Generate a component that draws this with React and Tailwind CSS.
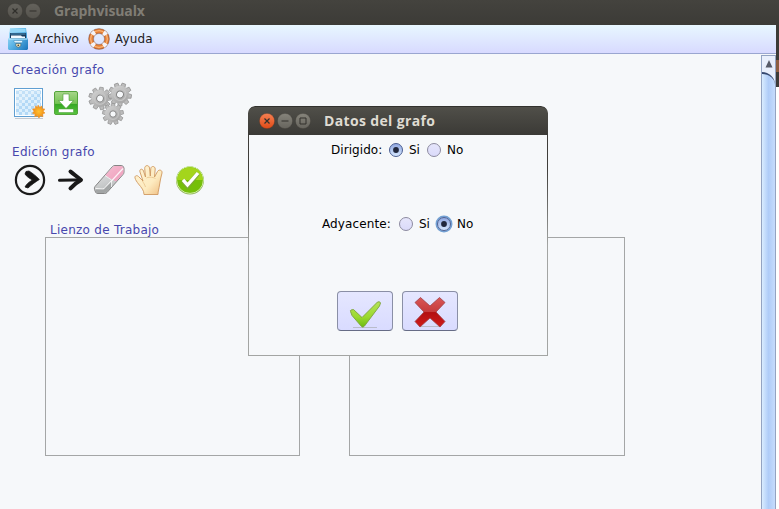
const S = "http://www.w3.org/2000/svg";

function WinButton({ kind, active, size }) {
  const id = "wb" + kind + (active ? "a" : "i");
  const top = !active ? "#64625c" : kind === "close" ? "#f68153" : "#86847b";
  const bottom = !active ? "#55534d" : kind === "close" ? "#df4a16" : "#66645d";
  const ink = active ? "#33312d" : "#302f2b";
  return (
    <svg xmlns={S} width={size} height={size} viewBox="0 0 16 16" className="block shrink-0">
      <defs>
        <linearGradient id={id} x2="0" y2="1">
          <stop stopColor={top} />
          <stop offset="1" stopColor={bottom} />
        </linearGradient>
      </defs>
      <circle cx="8" cy="8" r="7.7" fill={`url(#${id})`} stroke="#34322e" strokeWidth=".4" />
      {kind === "close" && <path d="M5.5 5.5l5 5m0-5l-5 5" stroke={ink} strokeWidth="1.2" />}
      {kind === "min" && <path d="M4.500 8h7" stroke={ink} strokeWidth="1" />}
      {kind === "max" && <path d="M5 5h6v6H5z" fill="none" stroke={ink} strokeWidth="1" />}
    </svg>
  );
}

function CabinetIcon() {
  return (
    <svg width="20" height="22" viewBox="0 0 20 22" className="block shrink-0">
      <defs>
        <linearGradient id="cab" x2="1" y2="1">
          <stop stopColor="#b4e6fc" />
          <stop offset=".5" stopColor="#5cb5e6" />
          <stop offset="1" stopColor="#1873bb" />
        </linearGradient>
      </defs>
      <path d="M2 0h16l.5 4 .5 1v5l1 1v10l-1 1H1l-1-1V11l1-1V5l.5-1z" fill="url(#cab)" />
      <path d="M2.500 1h15v3h-15z" fill="#93d6f6" />
      <path d="M2 5h16v5.500H2z" fill="#173c5e" />
      <path d="M2.500 6h15" stroke="#5ea8d4" strokeWidth=".8" />
      <path d="M3 7.500h10l1 1h3v1.500H3z" fill="#f4fbff" />
      <path d="M.5 11h19" stroke="#b8e9fd" strokeWidth="1.200" />
      <path d="M6 12.500h8.500v1.500l-1 .8H7l-1-.8z" fill="#dff4ff" stroke="#3985b5" strokeWidth=".5" />
      <path d="M7.800 15.500h5v2.500l-2.500 1.500-2.500-1.500z" fill="#efe6bd" stroke="#315c79" strokeWidth=".6" />
      <circle cx="10.300" cy="17.300" r=".9" fill="#4d4937" />
    </svg>
  );
}

function LifebuoyIcon() {
  return (
    <svg width="22" height="22" viewBox="0 0 22 22" className="block shrink-0">
      <circle cx="11" cy="11" r="8" fill="none" stroke="#a94f23" strokeWidth="5" />
      <circle cx="11" cy="11" r="8" fill="none" stroke="#e57f34" strokeWidth="4" />
      <circle cx="11" cy="11" r="8.300" fill="none" stroke="#f9b67c" strokeWidth="1.200" />
      <circle cx="11" cy="11" r="8" fill="none" stroke="#f4f4f8" strokeWidth="5" strokeDasharray="3.600 8.966" strokeDashoffset="-4.480" />
      <circle cx="11" cy="11" r="10.500" fill="none" stroke="#9d8580" strokeWidth=".5" />
      <circle cx="11" cy="11" r="5.500" fill="none" stroke="#9d8580" strokeWidth=".6" />
    </svg>
  );
}

function CanvasIcon() {
  return (
    <svg width="32" height="32" viewBox="0 0 32 32" className="block shrink-0">
      <defs>
        <pattern id="check" width="6" height="6" patternUnits="userSpaceOnUse" x="3" y="3">
          <path d="M0 0h6v6H0z" fill="#dceffc" />
          <path d="M0 0h3v3H0zM3 3h3v3H3z" fill="#b3d9f6" />
        </pattern>
        <radialGradient id="sun">
          <stop stopColor="#ffc233" />
          <stop offset="1" stopColor="#f08b14" />
        </radialGradient>
      </defs>
      <path d="M2 30.500h28" stroke="#c3c9d0" />
      <rect x="1.500" y="0.500" width="28" height="28" fill="#fff" stroke="#609fd2" />
      <path d="M3 2h25v25H3z" fill="url(#check)" />
      <path d="M3 2h25L3 19z" fill="#fff" opacity=".2" />
      <path d="M25 17l1.500 2.300L29 18l.2 2.700 2.600.3-1.500 2.300L32 25l-2.400 1 .4 2.700-2.600-.8L26 30l-1.700-2.200-2.500 1 .2-2.700-2.600-.8 1.600-2.100-1.500-2.200 2.700-.3.300-2.700 2.300 1.300z" fill="url(#sun)" stroke="#ee9531" strokeWidth=".6" />
    </svg>
  );
}

function DownloadIcon() {
  return (
    <svg width="26" height="26" viewBox="0 0 26 26" className="block shrink-0">
      <defs>
        <linearGradient id="dl" x2="0" y2="1">
          <stop stopColor="#a7d58a" />
          <stop offset=".52" stopColor="#74c352" />
          <stop offset=".54" stopColor="#35a722" />
          <stop offset="1" stopColor="#58c53f" />
        </linearGradient>
      </defs>
      <rect x="1.500" y="0.500" width="23" height="23" rx="1.500" fill="url(#dl)" stroke="#55a43c" />
      <path d="M10 3h6v6.500h4.500L13 17.500 5.500 9.500H10z" fill="#fff" stroke="#4a9b36" strokeWidth=".6" />
      <path d="M5.500 18h15v3.500h-15z" fill="#fff" stroke="#4a9b36" strokeWidth=".5" />
    </svg>
  );
}

function Gear({ x, y, r, turn }) {
  return (
    <g transform={`translate(${x} ${y}) rotate(${turn}) scale(${r})`}>
      {[0, 40, 80, 120, 160, 200, 240, 280, 320].map((a) => (
        <path key={a} d="M-2.200 -6l.6-4.200h3.200l.6 4.200z" transform={`rotate(${a})`} fill="#bcbcbc" stroke="#8d8d8d" strokeWidth=".6" />
      ))}
      <circle r="7.800" fill="url(#gear)" />
      <circle r="5.300" fill="none" stroke="#c6c6c6" strokeWidth=".9" />
      <circle r="3.100" fill="#f6f8fa" stroke="#808080" strokeWidth=".9" />
    </g>
  );
}

function GearsIcon() {
  return (
    <svg width="44" height="44" viewBox="0 0 44 44" className="block shrink-0">
      <defs>
        <linearGradient id="gear" x2="1" y2="1">
          <stop stopColor="#d6d6d6" />
          <stop offset="1" stopColor="#9f9f9f" />
        </linearGradient>
      </defs>
      <Gear x={12} y={16.500} r={1.1} turn={8} />
      <Gear x={32} y={12.500} r={1.13} turn={20} />
      <Gear x={25} y={32} r={1.03} turn={0} />
    </svg>
  );
}

function CircleArrowIcon() {
  return (
    <svg width="32" height="32" viewBox="0 0 32 32" className="block shrink-0">
      <circle cx="16" cy="16" r="14.100" fill="none" stroke="#1b1b1b" strokeWidth="2.200" />
      <path d="M12 7.500l3-.5c4 2.500 7 5 10.300 8.500-4 2.500-7.500 5-11.300 8.500l-3-1c1.500-3 4-5 7.500-7-3-1.600-6-3.500-7.500-6z" fill="#151515" stroke="#151515" strokeWidth=".8" strokeLinejoin="round" />
    </svg>
  );
}

function ArrowIcon() {
  return (
    <svg width="28" height="28" viewBox="0 0 28 28" className="block shrink-0">
      <path d="M2.500 14.300c7-.4 13-.5 20-.3" fill="none" stroke="#191919" strokeWidth="3" strokeLinecap="round" />
      <path d="M13.500 5.500c3.500 3 6.800 5.200 10.500 8.500-4 2.200-7.500 5-10.500 8.300" fill="none" stroke="#191919" strokeWidth="4" strokeLinecap="round" strokeLinejoin="round" />
    </svg>
  );
}

function EraserIcon() {
  return (
    <svg width="32" height="32" viewBox="0 0 32 32" className="block shrink-0">
      <defs>
        <linearGradient id="pink" x2="1" y2="1">
          <stop stopColor="#f5bdd0" />
          <stop offset="1" stopColor="#ee9dbc" />
        </linearGradient>
        <linearGradient id="grey" x1=".3" x2=".7" y2="1">
          <stop stopColor="#e6e7e8" />
          <stop offset="1" stopColor="#b3b6b6" />
        </linearGradient>
      </defs>
      <path d="M19.500 2.500Q20.500 1.500 22 1.500H28Q30.500 1.500 31 4V8Q31 9.500 30 10.500L14 28.500Q13 29.500 11.500 29.500H5Q3 29.500 2.500 28L1.500 25.500Q1 23.500 2 22.500Z" fill="url(#grey)" stroke="#858585" />
      <path d="M19.800 3Q20.800 2 22 2H28Q30 2 30.500 4V8Q30.500 9.500 29.500 10.500L23 17.500 12 11.500z" fill="url(#pink)" />
      <path d="M2.500 24.500L10 25Q11 25 12 24L30 4.500" fill="none" stroke="#fff" strokeWidth="1.200" opacity=".85" />
      <path d="M2.500 25.500H10.500L18 18v5.500L13.500 28 11.500 29H5Q3.300 29 3 27.500z" fill="#a2a5a5" />
      <path d="M12 11.500l6.500 4.500v7" fill="none" stroke="#f5f5f5" strokeWidth=".8" />
    </svg>
  );
}

function HandIcon() {
  return (
    <svg width="30" height="32" viewBox="0 0 30 32" className="block shrink-0">
      <defs>
        <linearGradient id="hand" x2="1" y2="1">
          <stop stopColor="#fff3d4" />
          <stop offset=".6" stopColor="#fdebc0" />
          <stop offset="1" stopColor="#efbd80" />
        </linearGradient>
      </defs>
      <path d="M10 30.500c0-4-2.500-7-5.500-10.500-1.500-2-3-4-3.500-6-.5-2.500 2-3 3.500-1.500l4.500 4.500-3-9C5 5 8.500 4 9.500 7l2 6-.8-8.500C10.500 1 15 .5 15.500 4l.8 8 .5-7.500C17.200 1.500 21.300 2 21.200 5l-.7 8 3-5.500c1.500-2.500 5-1.500 4.500 1.500-1 4-2 8-2.500 12-.5 4-1.500 6-1.500 9.500z" fill="url(#hand)" stroke="#cf9860" strokeWidth=".9" strokeLinejoin="round" />
      <path d="M8.500 17c1 2 2 3 3 6m1-9c1-1 6-1.200 9 .5" fill="none" stroke="#eccb96" />
    </svg>
  );
}

function OkIcon() {
  return (
    <svg width="30" height="30" viewBox="0 0 30 30" className="block shrink-0">
      <circle cx="15" cy="15.500" r="14" fill="#8fb35a" />
      <circle cx="15" cy="15" r="13.400" fill="#75bf0a" stroke="#d9efb0" strokeWidth=".9" />
      <path d="M2.200 15a12.800 12.800 0 0 1 25.600 0z" fill="#a4d51c" />
      <path d="M8 15.500l4.500 5.500L23 8.500" fill="none" stroke="#7fa83a" strokeWidth="4.400" />
      <path d="M8 14.800l4.500 5.200L23 8" fill="none" stroke="#fff" strokeWidth="3.400" />
    </svg>
  );
}

function Radio({ checked, focused }) {
  return (
    <svg width="18" height="18" viewBox="0 0 18 18" className="block shrink-0">
      <defs>
        <linearGradient id="rOn" x2="0" y2="1">
          <stop stopColor="#8fa6e0" />
          <stop offset="1" stopColor="#d7e9ff" />
        </linearGradient>
        <linearGradient id="rOff" x2="0" y2="1">
          <stop stopColor="#e6e6fb" />
          <stop offset="1" stopColor="#dadafa" />
        </linearGradient>
      </defs>
      {focused && <circle cx="9" cy="9" r="7.600" fill="none" stroke="#72a0d3" strokeWidth="1.800" />}
      <circle cx="9" cy="9" r="6.500" fill={checked ? "url(#rOn)" : "url(#rOff)"} stroke={checked ? "#4c5f92" : "#8d8ba0"} />
      {checked && <circle cx="9" cy="9" r="2.900" fill="#20273c" />}
    </svg>
  );
}

function AcceptIcon() {
  return (
    <svg width="34" height="32" viewBox="0 0 34 32" className="block">
      <defs>
        <linearGradient id="acc" x2="0" y2="1">
          <stop stopColor="#b5e35a" />
          <stop offset=".6" stopColor="#9bd92f" />
          <stop offset="1" stopColor="#6cbb12" />
        </linearGradient>
      </defs>
      <path d="M5 30.500h24" stroke="#b9bccb" strokeWidth="1" />
      <path d="M2.500 14.500Q2 13.500 3 13L5.500 12.500 14 20.500 29.500 5Q32 4 32.500 6L31.500 9 16.500 29Q15 31 13.500 29.500L4 18.500z" fill="url(#acc)" stroke="#7da23c" strokeWidth=".9" strokeLinejoin="round" />
    </svg>
  );
}

function CancelIcon() {
  return (
    <svg width="32" height="32" viewBox="0 0 32 32" className="block">
      <defs>
        <linearGradient id="can" x2="0" y2="1">
          <stop stopColor="#d95757" />
          <stop offset=".48" stopColor="#c63b3d" />
          <stop offset=".51" stopColor="#b30f12" />
          <stop offset="1" stopColor="#cf1b1b" />
        </linearGradient>
      </defs>
      <path d="M5 30.500h22" stroke="#b9bccb" />
      <path d="M6.500 1.500L16 10l9.500-8.500 5.500 5-9 9.500 9 9.500-5 5.500-10-9-10 9-5-5.500L10 16 1 6.500z" fill="url(#can)" stroke="#a04048" strokeWidth=".8" strokeLinejoin="round" />
    </svg>
  );
}

export default function App() {
  return (
    <div className="relative flex h-[509px] w-[779px] flex-col overflow-hidden bg-[#f6f8fa] font-['DejaVu_Sans',sans-serif] text-[12px] leading-[14px] text-[#222]">
      <header className="flex h-[25px] shrink-0 items-start bg-linear-to-b from-[#44433e] to-[#3c3b37] pl-[7px] pt-[2px]">
        <div className="flex gap-[2px] pt-[0.5px]">
          <WinButton kind="close" size={16} />
          <WinButton kind="min" size={16} />
        </div>
        <h1 className="ml-[13px] font-['Open_Sans',sans-serif] text-[14px] font-bold leading-[18px] tracking-[-0.12px] text-[#807d75]">Graphvisualx</h1>
      </header>
      <div className="flex min-h-0 grow">
        <div className="flex w-[776px] shrink-0 flex-col">
          <nav className="flex h-[29px] shrink-0 items-center border-b border-[#9aa6d0] bg-linear-to-b from-[#e8f7ff] to-[#d8daff] pl-2">
            <CabinetIcon />
            <span className="ml-[6px]">Archivo</span>
            <span className="ml-[9px]"><LifebuoyIcon /></span>
            <span className="ml-[5px] tracking-[0.15px]">Ayuda</span>
          </nav>
          <div className="flex min-h-0 grow">
            <main className="flex w-[761px] shrink-0 flex-col text-[#4747ad]">
              <h2 className="ml-3 mt-[9px] h-[14px] tracking-[0.32px]">Creación grafo</h2>
              <div className="ml-[13px] mt-[5px] flex h-[44px] items-center">
                <CanvasIcon />
                <span className="ml-[8px]"><DownloadIcon /></span>
                <span className="ml-[9px]"><GearsIcon /></span>
              </div>
              <h2 className="ml-3 mt-[19px] h-[14px] tracking-[0.32px]">Edición grafo</h2>
              <div className="ml-[14px] mt-[5px] flex h-[32px] items-center">
                <CircleArrowIcon />
                <span className="ml-[11px]"><ArrowIcon /></span>
                <span className="ml-[8px]"><EraserIcon /></span>
                <span className="ml-[9px]"><HandIcon /></span>
                <span className="ml-[11px]"><OkIcon /></span>
              </div>
              <h2 className="ml-[50px] mt-[27px] h-[14px] tracking-[0.26px]">Lienzo de Trabajo</h2>
              <div className="ml-[45px] flex gap-[49px]">
                <div className="h-[219px] w-[255px] border border-[#a4a6a6]" />
                <div className="h-[219px] w-[276px] border border-[#a4a6a6]" />
              </div>
            </main>
            <aside className="mt-px flex w-[15px] shrink-0 flex-col border-l border-r border-t border-[#93a3c2] bg-[#e9effc]">
              <svg width="13" height="16" viewBox="0 0 13 16" className="block shrink-0">
                <path d="M7 4l3.500 7.500h-7z" fill="#575b68" />
              </svg>
              <div className="grow rounded-tr-[13px] border-t-2 border-[#35486f] bg-linear-to-r from-[#d9ecff] via-[#afccf8] to-[#c6dcfc]" />
            </aside>
          </div>
        </div>
        <div className="flex grow flex-col">
          <div className="h-[22px] bg-[#3c3b37]" />
          <div className="flex h-[40px] flex-col items-end bg-[#3c3b37] pt-[13px]">
            <div className="h-[12px] w-[3px] bg-[#8d5e42]" />
          </div>
          <div className="grow bg-white" />
        </div>
      </div>

      <section role="dialog" className="absolute left-[248px] top-[106px] flex h-[250px] w-[300px] flex-col overflow-hidden rounded-t-[7px] bg-[#f6f8fa] text-black">
        <div className="flex h-[29px] shrink-0 items-center rounded-t-[7px] border-t border-[#32312d] bg-linear-to-b from-[#504f49] to-[#3b3a36] pl-[11px]">
          <div className="flex gap-[2px]">
            <WinButton kind="close" active size={16} />
            <WinButton kind="min" active size={16} />
            <WinButton kind="max" active size={16} />
          </div>
          <h2 className="ml-[13px] font-['Open_Sans',sans-serif] text-[14px] font-bold leading-[18px] tracking-[0.35px] text-[#dfdbd2]">Datos del grafo</h2>
        </div>
        <div className="flex grow">
          <div className="w-px shrink-0 bg-linear-to-b from-[#3f3e3a] from-15% to-[#a3a5a3] to-50%" />
          <div className="flex grow flex-col border-b border-[#a3a5a3]">
            <div className="ml-[82px] mt-[6px] flex h-[18px] items-center">
              <span className="w-[56px] tracking-[0.06px]">Dirigido:</span>
              <Radio checked />
              <span className="ml-[4px] w-[16px]">Si</span>
              <Radio />
              <span className="ml-[4px]">No</span>
            </div>
            <div className="ml-[73px] mt-[56px] flex h-[18px] items-center">
              <span className="w-[75px] tracking-[0.12px]">Adyacente:</span>
              <Radio />
              <span className="ml-[4px] w-[16px]">Si</span>
              <Radio checked focused />
              <span className="ml-[4px]">No</span>
            </div>
            <div className="ml-[88px] mt-[58px] flex gap-[9px]">
              <button className="flex h-[40px] w-[56px] items-center justify-center rounded-[4px] border border-[#8a8fa6] border-b-[#666c86] bg-linear-to-b from-[#e5e7ff] to-[#d9dbff] pt-[3px]"><AcceptIcon /></button>
              <button className="flex h-[40px] w-[56px] items-center justify-center rounded-[4px] border border-[#8a8fa6] border-b-[#666c86] bg-linear-to-b from-[#e5e7ff] to-[#d9dbff] pt-px"><CancelIcon /></button>
            </div>
          </div>
          <div className="w-px shrink-0 bg-linear-to-b from-[#3f3e3a] from-15% to-[#a3a5a3] to-50%" />
        </div>
      </section>
    </div>
  );
}
